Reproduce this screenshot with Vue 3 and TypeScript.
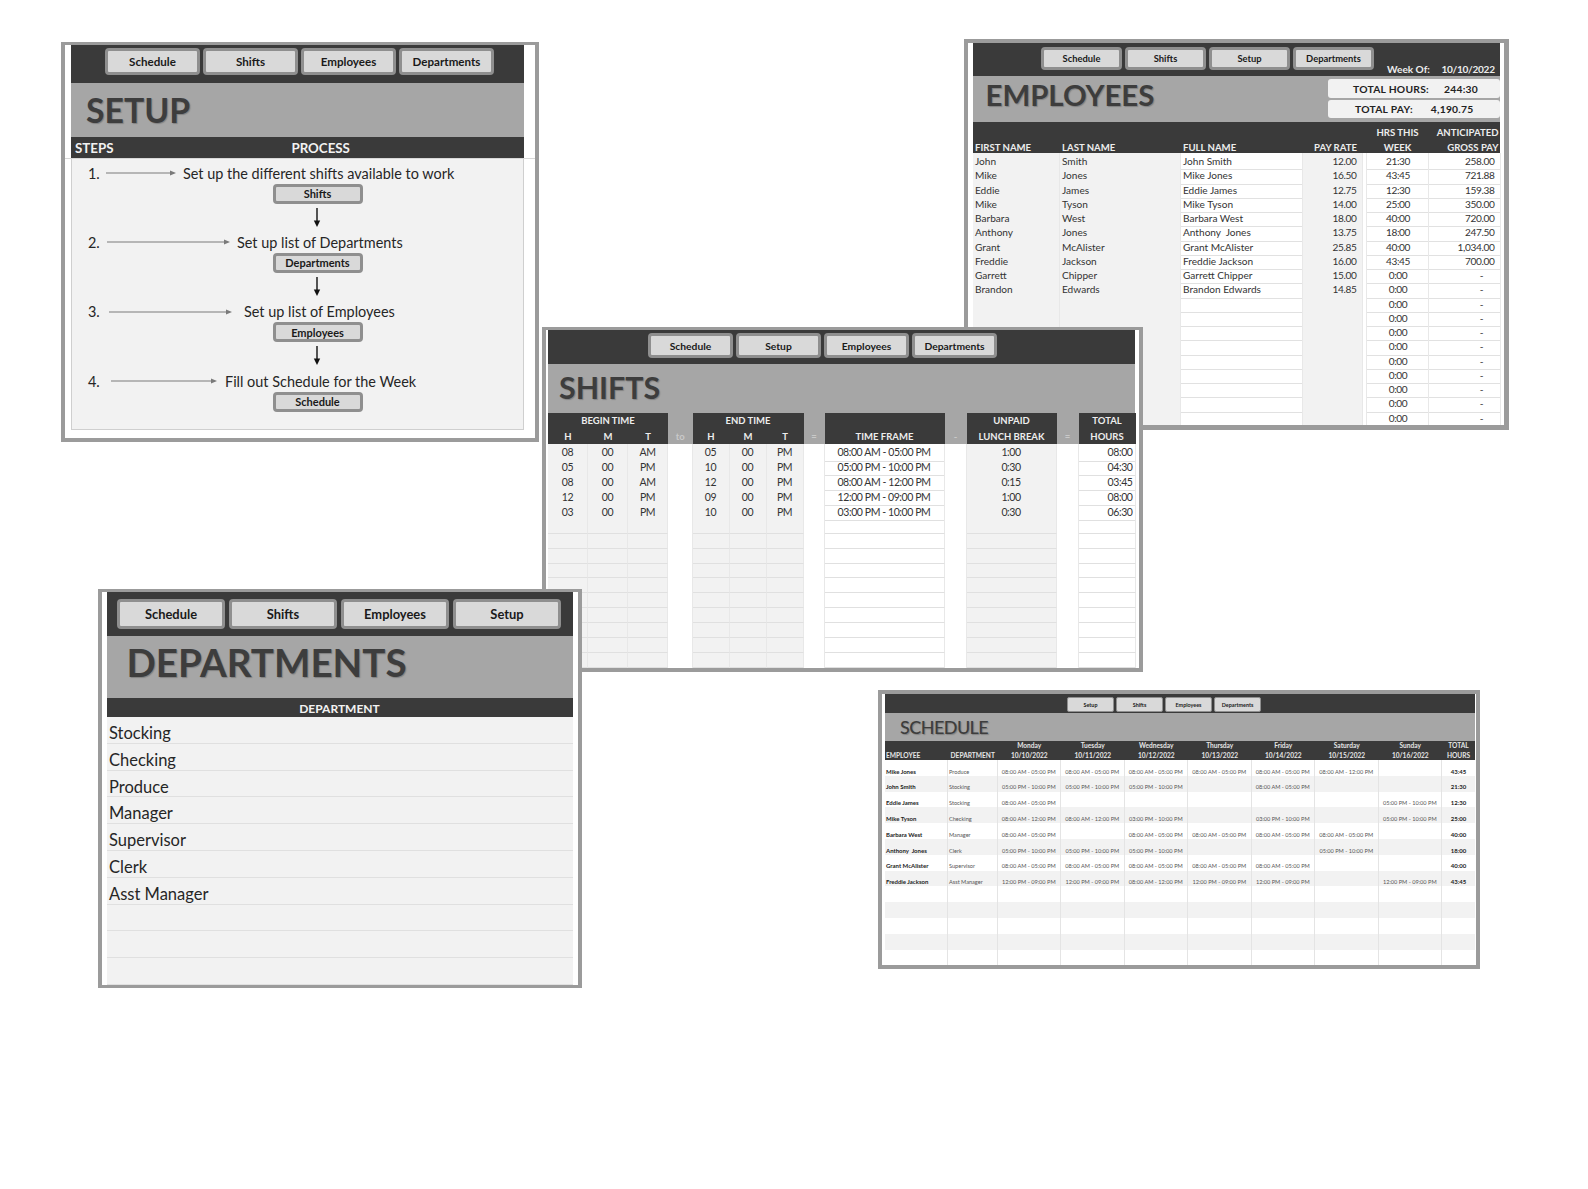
<script setup lang="ts">
const setupNav = ['Schedule', 'Shifts', 'Employees', 'Departments']
const empNav = ['Schedule', 'Shifts', 'Setup', 'Departments']
const shiftNav = ['Schedule', 'Setup', 'Employees', 'Departments']
const deptNav = ['Schedule', 'Shifts', 'Employees', 'Setup']
const schedNav = ['Setup', 'Shifts', 'Employees', 'Departments']

const steps = [
  { n: '1.', start: 5, arrow: 70, gap: 7, text: 'Set up the different shifts available to work', btn: 'Shifts' },
  { n: '2.', start: 6, arrow: 123, gap: 7, text: 'Set up list of Departments', btn: 'Departments' },
  { n: '3.', start: 8, arrow: 123, gap: 12, text: 'Set up list of Employees', btn: 'Employees' },
  { n: '4.', start: 10, arrow: 106, gap: 8, text: 'Fill out Schedule for the Week', btn: 'Schedule' }
]

const employees: string[][] = [
  ['John', 'Smith', 'John Smith', '12.00', '21:30', '258.00'],
  ['Mike', 'Jones', 'Mike Jones', '16.50', '43:45', '721.88'],
  ['Eddie', 'James', 'Eddie James', '12.75', '12:30', '159.38'],
  ['Mike', 'Tyson', 'Mike Tyson', '14.00', '25:00', '350.00'],
  ['Barbara', 'West', 'Barbara West', '18.00', '40:00', '720.00'],
  ['Anthony', 'Jones', 'Anthony  Jones', '13.75', '18:00', '247.50'],
  ['Grant', 'McAlister', 'Grant McAlister', '25.85', '40:00', '1,034.00'],
  ['Freddie', 'Jackson', 'Freddie Jackson', '16.00', '43:45', '700.00'],
  ['Garrett', 'Chipper', 'Garrett Chipper', '15.00', '0:00', '-'],
  ['Brandon', 'Edwards', 'Brandon Edwards', '14.85', '0:00', '-'],
  ...Array.from({ length: 9 }, () => ['', '', '', '', '0:00', '-'])
]

const shiftHead1 = [
  { t: 'BEGIN TIME', s: 3, dk: true }, { t: '', s: 1, dk: false },
  { t: 'END TIME', s: 3, dk: true }, { t: '', s: 1, dk: false },
  { t: '', s: 1, dk: true }, { t: '', s: 1, dk: false },
  { t: 'UNPAID', s: 1, dk: true }, { t: '', s: 1, dk: false },
  { t: 'TOTAL', s: 1, dk: true }
]
const shiftHead2 = [
  { t: 'H', dk: true }, { t: 'M', dk: true }, { t: 'T', dk: true }, { t: 'to', dk: false },
  { t: 'H', dk: true }, { t: 'M', dk: true }, { t: 'T', dk: true }, { t: '=', dk: false },
  { t: 'TIME FRAME', dk: true }, { t: '-', dk: false },
  { t: 'LUNCH BREAK', dk: true }, { t: '=', dk: false }, { t: 'HOURS', dk: true }
]
const shifts: string[][] = [
  ['08', '00', 'AM', '05', '00', 'PM', '08:00 AM - 05:00 PM', '1:00', '08:00'],
  ['05', '00', 'PM', '10', '00', 'PM', '05:00 PM - 10:00 PM', '0:30', '04:30'],
  ['08', '00', 'AM', '12', '00', 'PM', '08:00 AM - 12:00 PM', '0:15', '03:45'],
  ['12', '00', 'PM', '09', '00', 'PM', '12:00 PM - 09:00 PM', '1:00', '08:00'],
  ['03', '00', 'PM', '10', '00', 'PM', '03:00 PM - 10:00 PM', '0:30', '06:30'],
  ...Array.from({ length: 10 }, () => ['', '', '', '', '', '', '', '', ''])
]

const departments = ['Stocking', 'Checking', 'Produce', 'Manager', 'Supervisor', 'Clerk', 'Asst Manager', '', '', '']

const days = [
  ['Monday', '10/10/2022'], ['Tuesday', '10/11/2022'], ['Wednesday', '10/12/2022'], ['Thursday', '10/13/2022'],
  ['Friday', '10/14/2022'], ['Saturday', '10/15/2022'], ['Sunday', '10/16/2022']
]
const A = '08:00 AM - 05:00 PM'
const B = '05:00 PM - 10:00 PM'
const C = '08:00 AM - 12:00 PM'
const D = '03:00 PM - 10:00 PM'
const E = '12:00 PM - 09:00 PM'
const schedule = [
  { name: 'Mike Jones', dept: 'Produce', d: [A, A, A, A, A, C, ''], total: '43:45' },
  { name: 'John Smith', dept: 'Stocking', d: [B, B, B, '', A, '', ''], total: '21:30' },
  { name: 'Eddie James', dept: 'Stocking', d: [A, '', '', '', '', '', B], total: '12:30' },
  { name: 'Mike Tyson', dept: 'Checking', d: [C, C, D, '', D, '', B], total: '25:00' },
  { name: 'Barbara West', dept: 'Manager', d: [A, '', A, A, A, A, ''], total: '40:00' },
  { name: 'Anthony  Jones', dept: 'Clerk', d: [B, B, B, '', '', B, ''], total: '18:00' },
  { name: 'Grant McAlister', dept: 'Supervisor', d: [A, A, A, A, A, '', ''], total: '40:00' },
  { name: 'Freddie Jackson', dept: 'Asst Manager', d: [E, E, C, E, E, '', E], total: '43:45' },
  ...Array.from({ length: 5 }, () => ({ name: '', dept: '', d: ['', '', '', '', '', '', ''], total: '' }))
]
</script>

<template>
  <main class="desk">
    <!-- SETUP -->
    <section class="win w-setup">
      <nav class="nav"><div v-for="b in setupNav" :key="b" class="btn">{{ b }}</div></nav>
      <div class="band"><h1 class="title">SETUP</h1></div>
      <div class="setup-head"><span>STEPS</span><span class="process">PROCESS</span></div>
      <div class="setup-body">
        <div v-for="s in steps" :key="s.n" class="step">
          <div class="step-line">
            <span class="step-n">{{ s.n }}</span>
            <svg class="arrow" :width="s.arrow" height="8" :style="{ marginLeft: s.start + 'px', marginRight: s.gap + 'px' }">
              <line x1="0" y1="4" :x2="s.arrow - 4" y2="4" stroke="#7a7a7a" stroke-width="1.2" />
              <path :d="`M${s.arrow} 4l-6 -2.6v5.2z`" fill="#7a7a7a" />
            </svg>
            <span>{{ s.text }}</span>
          </div>
          <div class="btn step-btn">{{ s.btn }}</div>
          <svg v-if="s.n !== '4.'" class="down" width="8" height="19">
            <line x1="4" y1="0" x2="4" y2="14" stroke="#111" stroke-width="1.4" />
            <path d="M4 19L0.8 12.5h6.4z" fill="#111" />
          </svg>
        </div>
      </div>
    </section>

    <!-- EMPLOYEES -->
    <section class="win w-emp">
      <nav class="nav">
        <div v-for="b in empNav" :key="b" class="btn">{{ b }}</div>
        <div class="week"><span>Week Of:</span><span class="week-date">10/10/2022</span></div>
      </nav>
      <div class="band">
        <h1 class="title">EMPLOYEES</h1>
        <div class="totals">
          <div class="total-box"><span class="tl1">TOTAL HOURS:</span><span>244:30</span></div>
          <div class="total-box"><span class="tl2">TOTAL PAY:</span><span>4,190.75</span></div>
        </div>
      </div>
      <div class="emp-grid emp-head">
        <div>FIRST NAME</div><div>LAST NAME</div><div>FULL NAME</div><div class="r pay">PAY RATE</div><div></div>
        <div class="c">HRS THIS<br />WEEK</div><div class="r">ANTICIPATED<br />GROSS PAY</div>
      </div>
      <div v-for="(e, i) in employees" :key="i" class="emp-grid emp-row">
        <div class="g">{{ e[0] }}</div>
        <div class="g">{{ e[1] }}</div>
        <div class="ws">{{ e[2] }}</div>
        <div class="g rv">{{ e[3] }}</div>
        <div class="sp"></div>
        <div class="c">{{ e[4] }}</div>
        <div :class="e[5] === '-' ? 'dash' : 'rv'">{{ e[5] }}</div>
      </div>
    </section>

    <!-- SHIFTS -->
    <section class="win w-shift">
      <nav class="nav"><div v-for="b in shiftNav" :key="b" class="btn">{{ b }}</div></nav>
      <div class="band"><h1 class="title">SHIFTS</h1></div>
      <div class="shift-grid shift-head">
        <div v-for="(h, i) in shiftHead1" :key="'a' + i" :class="{ dk: h.dk }" :style="{ gridColumn: 'span ' + h.s }">{{ h.t }}</div>
        <div v-for="(h, i) in shiftHead2" :key="'b' + i" class="low" :class="h.dk ? 'dk' : 'op'">{{ h.t }}</div>
      </div>
      <div v-for="(r, i) in shifts" :key="i" class="shift-grid shift-row">
        <div class="g">{{ r[0] }}</div><div class="g">{{ r[1] }}</div><div class="g">{{ r[2] }}</div>
        <div class="sp"></div>
        <div class="g">{{ r[3] }}</div><div class="g">{{ r[4] }}</div><div class="g">{{ r[5] }}</div>
        <div class="sp"></div>
        <div>{{ r[6] }}</div>
        <div class="sp"></div>
        <div class="g">{{ r[7] }}</div>
        <div class="sp"></div>
        <div class="rv">{{ r[8] }}</div>
      </div>
    </section>

    <!-- DEPARTMENTS -->
    <section class="win w-dept">
      <nav class="nav"><div v-for="b in deptNav" :key="b" class="btn">{{ b }}</div></nav>
      <div class="band"><h1 class="title">DEPARTMENTS</h1></div>
      <div class="dept-head">DEPARTMENT</div>
      <div v-for="(d, i) in departments" :key="i" class="dept-row">{{ d }}</div>
    </section>

    <!-- SCHEDULE -->
    <section class="win w-sched">
      <nav class="nav"><div v-for="b in schedNav" :key="b" class="btn">{{ b }}</div></nav>
      <div class="band"><h1 class="title">SCHEDULE</h1></div>
      <div class="sched-grid sched-head">
        <div class="l">EMPLOYEE</div><div>DEPARTMENT</div>
        <div v-for="d in days" :key="d[0]">{{ d[0] }}<br />{{ d[1] }}</div>
        <div>TOTAL<br />HOURS</div>
      </div>
      <div v-for="(r, i) in schedule" :key="i" class="sched-grid sched-row" :class="{ alt: i % 2 === 1 }">
        <div class="nm">{{ r.name }}</div>
        <div class="dp">{{ r.dept }}</div>
        <div v-for="(c, j) in r.d" :key="j">{{ c }}</div>
        <div class="tt">{{ r.total }}</div>
      </div>
    </section>
  </main>
</template>

<style>
html, body { margin: 0; background: #fff; }
</style>

<style scoped>
.desk {
  position: relative;
  width: 1588px;
  height: 1189px;
  overflow: hidden;
  background: #fff;
  font-family: Lato, "Liberation Sans", sans-serif;
  color: #262626;
}
.win {
  position: absolute;
  box-sizing: border-box;
  background: #fff;
  border: 4px solid #9b9b9b;
  display: flex;
  flex-direction: column;
  overflow: hidden;
}
.nav { display: flex; background: #3a3a3a; flex: none; box-sizing: border-box; }
.band { background: #a6a6a6; flex: none; display: flex; box-sizing: border-box; }
.title {
  margin: 0;
  color: #3d3d3d;
  font-weight: 700;
  line-height: 1;
  text-shadow: 1px 1px 1px rgba(60, 60, 60, .35);
}
.btn {
  box-sizing: border-box;
  display: flex;
  align-items: center;
  justify-content: center;
  background: #d9d9d9;
  border: 3px solid #8f8f8f;
  border-radius: 4px;
  font-weight: 700;
  color: #1a1a1a;
  white-space: nowrap;
}

/* setup */
.w-setup { left: 61px; top: 42px; width: 478px; height: 400px; border-top-width: 3px; padding: 0 11px 8px 6px; }
.w-setup .nav { height: 38px; padding: 3px 0 0 34px; gap: 3px; }
.w-setup .nav .btn { width: 95px; height: 27px; font-size: 11.6px; }
.w-setup .band { height: 54px; padding: 11px 0 0 15px; }
.w-setup .title { font-size: 33.8px; }
.setup-head {
  position: relative;
  height: 21px;
  flex: none;
  display: flex;
  align-items: center;
  padding-left: 4px;
  background: #3a3a3a;
  color: #f2f2f2;
  font-weight: 700;
  font-size: 13.3px;
}
.setup-head::after {
  content: "";
  position: absolute;
  left: -6px;
  right: -11px;
  bottom: -1px;
  height: 1px;
  background: #d8d8d8;
}
.process { margin-left: 178px; }
.setup-body {
  flex: 1;
  min-height: 0;
  box-sizing: border-box;
  background: #f2f2f2;
  border: 1px solid #cfcfcf;
  border-top: 0;
  padding-top: 5.6px;
}
.step { height: 69.33px; display: flex; flex-direction: column; }
.step:last-child { height: auto; }
.step-line { display: flex; align-items: center; height: 19px; padding-left: 16px; font-size: 14.45px; white-space: nowrap; }
.step-n { width: 13px; }
.arrow { flex: none; }
.step-btn { width: 90px; height: 20px; margin: 1px 0 0 200.5px; font-size: 11px; }
.down { margin: 4px 0 0 240.5px; flex: none; }

/* employees */
.w-emp { left: 964px; top: 39px; width: 545px; height: 391px; border-right-width: 5px; border-bottom-width: 5px; padding: 0 4px 0 5px; }
.w-emp .nav { height: 33px; padding: 4px 0 0 68px; gap: 3px; }
.w-emp .nav .btn { width: 81px; height: 23px; font-size: 9.4px; }
.week {
  display: flex;
  align-self: flex-end;
  margin: 0 0 0 10px;
  color: #ededed;
  font-weight: 700;
  font-size: 10.1px;
  line-height: 13px;
  white-space: nowrap;
}
.week-date { margin-left: 11.5px; letter-spacing: -.3px; }
.w-emp .band { height: 46px; padding: 3px 0 0 12.5px; justify-content: space-between; }
.w-emp .title { font-size: 29.4px; margin-top: 1px; }
.totals { display: flex; flex-direction: column; gap: 2px; width: 172px; }
.total-box {
  height: 18.5px;
  padding-top: 1px;
  box-sizing: border-box;
  background: #f2f2f2;
  border-radius: 3px;
  display: flex;
  align-items: center;
  font-size: 10.3px;
  font-weight: 700;
  color: #222;
  letter-spacing: .25px;
  white-space: nowrap;
}
.tl1 { margin: 0 15px 0 25px; }
.tl2 { margin: 0 18px 0 27px; }
.emp-grid { display: grid; grid-template-columns: 87px 121px 121.5px 60px 4px 62px 72px; flex: none; }
.emp-head {
  height: 31px;
  background: #3a3a3a;
  color: #ededed;
  font-size: 9.6px;
  font-weight: 700;
  line-height: 15px;
  align-items: end;
}
.emp-head > div { position: relative; top: 1.5px; }
.emp-head > div:nth-child(-n+3) { padding-left: 2px; }
.emp-head .r { text-align: right; padding-right: 2px; }
.emp-head .pay { padding-right: 5.5px; }
.emp-head .c { text-align: center; }
.emp-row { height: 14.25px; font-size: 10.1px; line-height: 16.4px; color: #333; }
.emp-row > div { box-sizing: border-box; border-bottom: 1px solid #e1e1e1; border-right: 1px solid #e8e8e8; padding-left: 2px; white-space: nowrap; }
.emp-row .g { background: #f2f2f2; }
.emp-row .ws { white-space: pre; }
.emp-row .sp { border-bottom: 0; }
.emp-row .c { text-align: center; letter-spacing: -.4px; }
.emp-row .rv { text-align: right; padding-right: 5px; letter-spacing: -.35px; }
.emp-row .dash { text-align: right; padding-right: 16px; }

/* shifts */
.w-shift { left: 542px; top: 327px; width: 601px; height: 345px; border-top-width: 3px; padding: 0 4px 0 2px; }
.w-shift .nav { height: 34px; padding: 3px 0 0 100px; gap: 3px; }
.w-shift .nav .btn { width: 85px; height: 25px; font-size: 10.3px; }
.w-shift .band { height: 49px; padding: 8px 0 0 11px; }
.w-shift .title { font-size: 30.4px; }
.shift-grid { display: grid; grid-template-columns: 40px 40px 40px 24.5px 37px 37px 37px 21px 120px 22px 90px 22px 57px; flex: none; }
.shift-head {
  grid-template-rows: 15px 16px;
  background: #a6a6a6;
  color: #ededed;
  font-size: 9.5px;
  font-weight: 700;
  text-align: center;
  line-height: 16px;
}
.shift-head .dk { background: #3a3a3a; }
.shift-head .op { color: #c9c9c9; }
.shift-head .low { line-height: 18px; }
.shift-row { height: 14.95px; font-size: 10.5px; line-height: 16.5px; text-align: center; color: #333; letter-spacing: -.42px; }
.shift-row > div { box-sizing: border-box; border-bottom: 1px solid #e0e0e0; border-right: 1px solid #e8e8e8; }
.shift-row .g { background: #f2f2f2; }
.shift-row .sp { border-bottom: 0; }
.shift-row .rv { text-align: right; padding-right: 2px; }

/* departments */
.w-dept { left: 98px; top: 589px; width: 484px; height: 399px; border-top-width: 3px; border-bottom-width: 3px; padding: 0 5.5px 0 4.5px; }
.w-dept .nav { height: 44px; padding: 7px 0 0 10.5px; gap: 4px; }
.w-dept .nav .btn { width: 108px; height: 30px; font-size: 12.9px; }
.w-dept .band { height: 62px; padding: 7px 0 0 20px; }
.w-dept .title { font-size: 38.6px; }
.dept-head {
  height: 19px;
  flex: none;
  background: #3a3a3a;
  color: #f2f2f2;
  font-weight: 700;
  font-size: 12px;
  text-align: center;
  line-height: 21px;
}
.dept-row {
  box-sizing: border-box;
  height: 26.8px;
  flex: none;
  padding-left: 2.5px;
  background: #f2f2f2;
  border-bottom: 1px solid #e0e0e0;
  font-size: 16.5px;
  line-height: 33px;
  color: #262626;
}

/* schedule */
.w-sched { left: 878px; top: 690px; width: 602px; height: 279px; padding: 0 1px 0 3px; }
.w-sched .nav { height: 19px; padding: 3px 0 0 182px; gap: 2px; }
.w-sched .nav .btn { width: 47px; height: 15px; font-size: 5.4px; border-width: 1.5px; border-radius: 2px; }
.w-sched .band { height: 28px; padding: 5px 0 0 15px; }
.w-sched .title { font-size: 18px; font-weight: 500; letter-spacing: -.55px; }
.sched-grid { display: grid; grid-template-columns: 63px 49.5px 63.5px 63.5px 63.5px 63.5px 63.5px 63.5px 63.5px 33px; flex: none; }
.sched-head {
  height: 19px;
  background: #3a3a3a;
  color: #e6e6e6;
  font-size: 6.6px;
  font-weight: 700;
  line-height: 9.5px;
  text-align: center;
  align-items: end;
}
.sched-head .l { text-align: left; padding-left: 1px; }
.sched-row { height: 15.8px; font-size: 5.6px; line-height: 9px; text-align: center; color: #555; background: #fff; }
.sched-row.alt { background: #f2f2f2; }
.sched-row > div { box-sizing: border-box; padding-top: 6.6px; border-right: 1px solid #e4e4e4; white-space: nowrap; }
.sched-row .nm { text-align: left; padding-left: 1px; font-size: 6px; font-weight: 700; color: #222; white-space: pre; }
.sched-row .dp { text-align: left; padding-left: 1px; }
.sched-row .tt { font-size: 6px; font-weight: 700; color: #222; border-right: 0; }
</style>
